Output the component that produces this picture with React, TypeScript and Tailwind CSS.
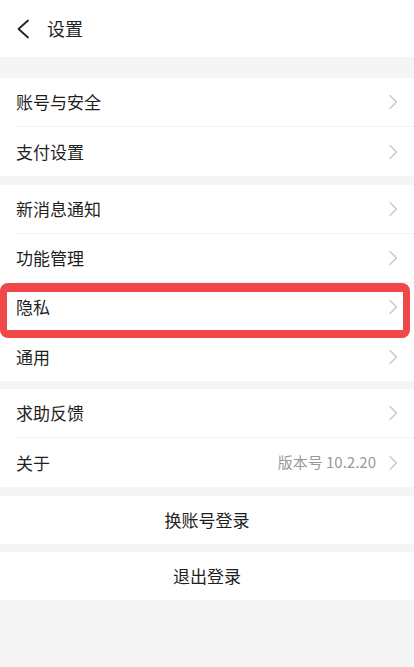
import { FC, ReactNode } from "react";

const font = { fontFamily: '"Noto Sans CJK SC", "Noto Sans", sans-serif' };

const Chevron: FC = () => (
  <svg width="10" height="16" viewBox="0 0 10 16" className="shrink-0">
    <polyline points="2,1.5 8.5,8 2,14.5" fill="none" stroke="#c8c8c8" strokeWidth="1.4" strokeLinecap="round" strokeLinejoin="round" />
  </svg>
);

type RowProps = {
  label: string;
  extra?: string;
  divider?: boolean;
  children?: ReactNode;
};

const Row: FC<RowProps> = ({ label, extra, divider, children }) => (
  <div className="relative h-[49px] flex items-center bg-white pl-4">
    <div className={`flex-1 h-full flex items-center pr-4 ${divider ? "border-b border-[#f2f2f2]" : ""}`}>
      <span className="flex-1 text-[17px] text-[#1f1f1f]">{label}</span>
      {extra && <span className="text-[15px] text-[#9a9a9a] mr-3">{extra}</span>}
      <Chevron />
    </div>
    {children}
  </div>
);

const Group: FC<{ children: ReactNode }> = ({ children }) => <div className="bg-white">{children}</div>;

export default function App() {
  return (
    <div className="w-[414px] min-h-[667px] bg-[#f5f5f5]" style={font}>
      {/* header */}
      <div className="h-[57px] bg-white flex items-center pl-4">
        <svg width="14" height="20" viewBox="0 0 14 20">
          <polyline points="12,1.5 2.5,10 12,18.5" fill="none" stroke="#222" strokeWidth="1.8" strokeLinecap="round" strokeLinejoin="round" />
        </svg>
        <span className="ml-[17px] text-[18px] text-[#1f1f1f]">设置</span>
      </div>

      <div className="h-[21px]" />
      <Group>
        <Row label="账号与安全" divider />
        <Row label="支付设置" />
      </Group>

      <div className="h-[9px]" />
      <Group>
        <Row label="新消息通知" divider />
        <Row label="功能管理" divider />
        <Row label="隐私" divider>
          {/* highlight annotation */}
          <div className="absolute z-10 left-0 right-[4px] top-0 -bottom-[6px] border-[7px] border-t-[9px] border-b-[8px] border-[#f04848] rounded-lg pointer-events-none" />
        </Row>
        <Row label="通用" />
      </Group>

      <div className="h-[8px]" />
      <Group>
        <Row label="求助反馈" divider />
        <Row label="关于" extra="版本号 10.2.20" />
      </Group>

      <div className="h-[9px]" />
      <button className="w-full h-[48px] bg-white text-[17px] text-[#1f1f1f] flex items-center justify-center">换账号登录</button>
      <div className="h-[8px]" />
      <button className="w-full h-[48px] bg-white text-[17px] text-[#1f1f1f] flex items-center justify-center">退出登录</button>
    </div>
  );
}
